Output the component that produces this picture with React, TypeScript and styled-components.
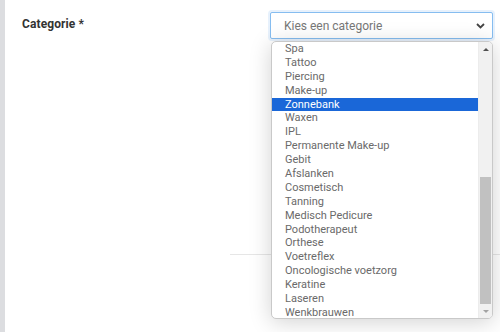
import React from 'react'
import styled, { createGlobalStyle } from 'styled-components'

const GlobalStyle = createGlobalStyle`
  html, body {
    margin: 0;
    padding: 0;
    background: #ffffff;
  }
  body {
    font-family: Roboto, "Liberation Sans", Arial, sans-serif;
  }
`

const Page = styled.div`
  display: flex;
  width: 500px;
  height: 332px;
  overflow: hidden;
  background: #ffffff;
`

const SideStrip = styled.div`
  width: 5px;
  flex-shrink: 0;
  background: #dcdde0;
`

const Content = styled.div`
  flex: 1;
  position: relative;
  padding: 12px 0 0 17px;
`

const FormRow = styled.div`
  display: flex;
  align-items: flex-start;
`

const Label = styled.label`
  width: 248px;
  padding-top: 5px;
  font-size: 12px;
  font-weight: 700;
  color: #333333;
  letter-spacing: 0.1px;
`

const Field = styled.div`
  position: relative;
  width: 223px;
`

const Select = styled.div`
  display: flex;
  align-items: center;
  justify-content: space-between;
  box-sizing: border-box;
  height: 27px;
  padding: 0 7px 0 13px;
  border: 1px solid #86bdf0;
  border-radius: 2px;
  box-shadow: 0 0 0 2px rgba(120, 180, 240, 0.18);
  font-size: 12px;
  color: #777777;
  background: #ffffff;
`

const Divider = styled.div`
  position: absolute;
  left: 225px;
  right: 0;
  top: 254px;
  height: 1px;
  background: #e6e6e6;
`

const Menu = styled.div`
  position: absolute;
  top: 29px;
  left: 1px;
  width: 222px;
  height: 278px;
  box-sizing: border-box;
  display: flex;
  border: 1px solid #c9c9c9;
  border-radius: 5px;
  background: #ffffff;
  box-shadow: 0 3px 22px rgba(0, 0, 0, 0.18);
  overflow: hidden;
  z-index: 2;
`

const OptionList = styled.ul`
  flex: 1;
  margin: 0;
  padding: 0;
  list-style: none;
`

const Option = styled.li<{ $selected?: boolean }>`
  height: 13.9px;
  line-height: 13.9px;
  padding-left: 13px;
  font-size: 11px;
  white-space: nowrap;
  color: ${p => (p.$selected ? '#ffffff' : '#6a6a6a')};
  background: ${p => (p.$selected ? '#1a67d8' : 'transparent')};
`

const Scrollbar = styled.div`
  width: 13px;
  display: flex;
  flex-direction: column;
  align-items: stretch;
  background: #f1f1f1;
  border-left: 1px solid #ececec;
`

const Arrow = styled.div<{ $down?: boolean }>`
  height: 14px;
  display: flex;
  align-items: center;
  justify-content: center;

  &::before {
    content: '';
    border-left: 3px solid transparent;
    border-right: 3px solid transparent;
    ${p =>
      p.$down
        ? 'border-top: 3px solid #a3a3a3;'
        : 'border-bottom: 3px solid #505050;'}
  }
`

const Track = styled.div`
  flex: 1;
  display: flex;
  flex-direction: column;
  justify-content: flex-end;
  padding: 0 1px;
`

const Thumb = styled.div`
  height: 127px;
  background: #c1c1c1;
`

const Chevron = () => (
  <svg width="9" height="6" viewBox="0 0 9 6" fill="none">
    <path d="M1 1l3.5 3.5L8 1" stroke="#444" strokeWidth="1.8" />
  </svg>
)

const categories = [
  'Spa',
  'Tattoo',
  'Piercing',
  'Make-up',
  'Zonnebank',
  'Waxen',
  'IPL',
  'Permanente Make-up',
  'Gebit',
  'Afslanken',
  'Cosmetisch',
  'Tanning',
  'Medisch Pedicure',
  'Podotherapeut',
  'Orthese',
  'Voetreflex',
  'Oncologische voetzorg',
  'Keratine',
  'Laseren',
  'Wenkbrauwen',
]

export default function App() {
  return (
    <>
      <GlobalStyle />
      <Page>
        <SideStrip />
        <Content>
          <FormRow>
            <Label>Categorie *</Label>
            <Field>
              <Select>
                Kies een categorie
                <Chevron />
              </Select>
              <Menu>
                <OptionList>
                  {categories.map(c => (
                    <Option key={c} $selected={c === 'Zonnebank'}>
                      {c}
                    </Option>
                  ))}
                </OptionList>
                <Scrollbar>
                  <Arrow />
                  <Track>
                    <Thumb />
                  </Track>
                  <Arrow $down />
                </Scrollbar>
              </Menu>
            </Field>
          </FormRow>
          <Divider />
        </Content>
      </Page>
    </>
  )
}
